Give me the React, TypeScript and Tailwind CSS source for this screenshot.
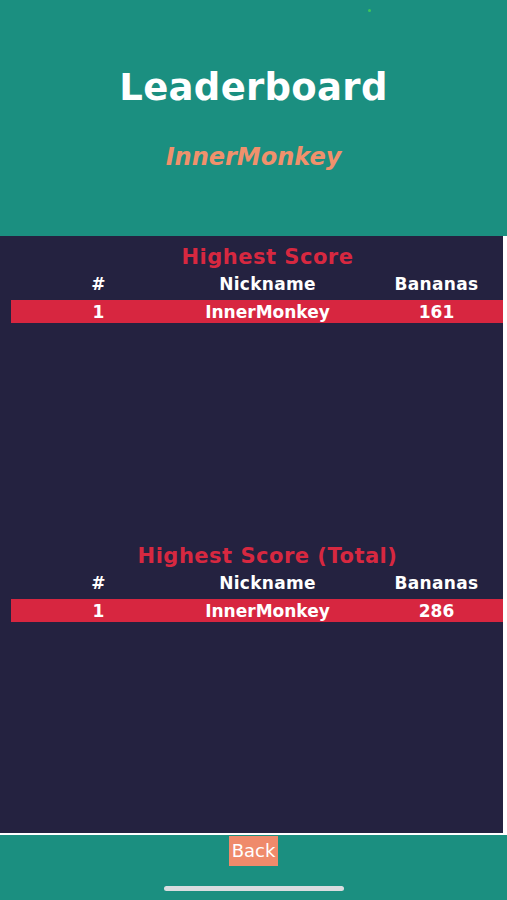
const rows = [
  { title: 'Highest Score', entries: [{ rank: 1, nickname: 'InnerMonkey', bananas: 161 }] },
  { title: 'Highest Score (Total)', entries: [{ rank: 1, nickname: 'InnerMonkey', bananas: 286 }] },
]

const ScoreTable = ({ title, entries }: (typeof rows)[number]) => (
  <section className="flex-1 pt-[11px]">
    <div className="ml-[11px] w-[510px]">
      <h2 className="pl-[3px] text-center text-[21px] leading-none font-bold tracking-[0.5px] text-[#d72840]">{title}</h2>
      <div className="pl-[3px] mt-[8px] grid grid-cols-[169px_169px_169px] text-[17px] leading-[17px] font-bold tracking-[0.3px] text-white text-center">
        <span>#</span>
        <span>Nickname</span>
        <span>Bananas</span>
      </div>
      {entries.map(e => (
        <div
          key={e.rank}
          className="pl-[3px] mt-[7px] h-[23px] grid grid-cols-[169px_169px_169px] items-center bg-[#d72640] text-[17px] font-bold text-white text-center"
        >
          <span>{e.rank}</span>
          <span>{e.nickname}</span>
          <span>{e.bananas}</span>
        </div>
      ))}
    </div>
  </section>
)

export default function App() {
  return (
    <div className="relative w-full h-[900px] flex flex-col font-['DejaVu_Sans',sans-serif] bg-[#1b8f80]">
      {/* status dot */}
      <span className="absolute left-[368px] top-[9px] w-[3px] h-[3px] rounded-full bg-[#3ec55a]" />

      {/* Header */}
      <header className="h-[236px] shrink-0 flex flex-col items-center pt-[69px] bg-[#1b8f80]">
        <h1 className="text-[37px] leading-none font-bold tracking-[0.3px] text-white">Leaderboard</h1>
        <p className="mt-[39px] text-[24px] leading-none font-bold italic text-[#f0916c]">InnerMonkey</p>
      </header>

      {/* Tables */}
      <main className="flex-1 flex flex-col overflow-hidden bg-[#242240] border-r-4 border-b-2 border-white">
        {rows.map(r => (
          <ScoreTable key={r.title} {...r} />
        ))}
      </main>

      {/* Footer */}
      <footer className="h-[65px] shrink-0 flex flex-col items-center bg-[#1b8f80]">
        <button className="mt-px w-[49px] h-[30px] bg-[#ef8a6b] text-white text-[18px] leading-none">Back</button>
        <div className="mt-[20px] w-[180px] h-[5px] rounded-full bg-[#d9dde0]" />
      </footer>
    </div>
  )
}
